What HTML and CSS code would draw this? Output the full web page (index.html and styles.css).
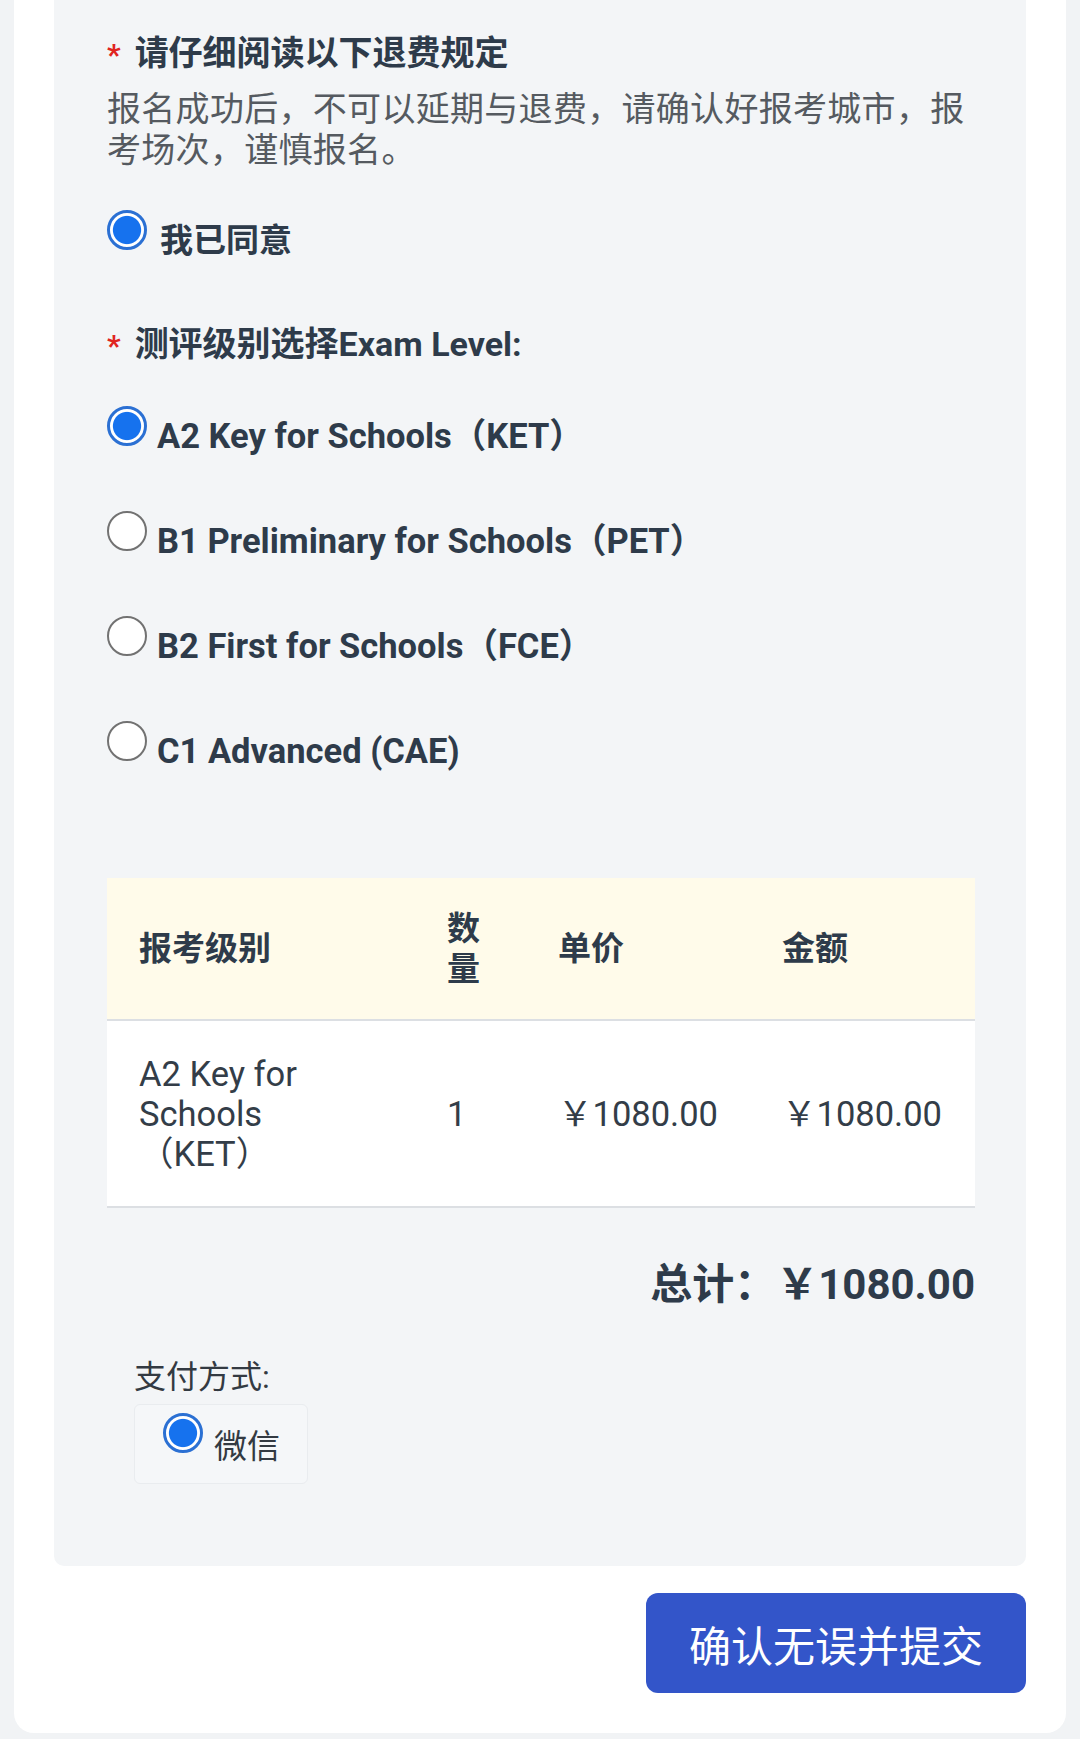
FILE: index.html
```html
<!DOCTYPE html>
<html lang="zh-CN">
<head>
<meta charset="utf-8">
<title>报名确认</title>
<link rel="stylesheet" href="styles.css">
</head>
<body>
<div class="card">
  <div class="panel">
    <div class="label"><span class="req">*</span>请仔细阅读以下退费规定</div>
    <p class="notice">报名成功后，不可以延期与退费，请确认好报考城市，报考场次，谨慎报名。</p>
    <div class="agree">
      <span class="radio checked"></span>
      <span class="agree-text">我已同意</span>
    </div>

    <div class="label level-label"><span class="req">*</span>测评级别选择Exam Level:</div>
    <div class="options">
      <div class="option"><span class="radio checked"></span><span class="opt-text">A2 Key for Schools（KET）</span></div>
      <div class="option"><span class="radio"></span><span class="opt-text">B1 Preliminary for Schools（PET）</span></div>
      <div class="option"><span class="radio"></span><span class="opt-text">B2 First for Schools（FCE）</span></div>
      <div class="option"><span class="radio"></span><span class="opt-text">C1 Advanced (CAE)</span></div>
    </div>

    <table class="order">
      <colgroup>
        <col class="c1"><col class="c2"><col class="c3"><col class="c4">
      </colgroup>
      <thead>
        <tr><th>报考级别</th><th>数量</th><th>单价</th><th>金额</th></tr>
      </thead>
      <tbody>
        <tr><td>A2 Key for Schools（KET）</td><td>1</td><td class="amt">￥1080.00</td><td class="amt">￥1080.00</td></tr>
      </tbody>
    </table>

    <div class="total">总计：￥1080.00</div>

    <div class="pay-label">支付方式:</div>
    <div class="pay-box">
      <span class="radio checked"></span>
      <span class="pay-text">微信</span>
    </div>
  </div>
  <div class="actions">
    <button class="submit">确认无误并提交</button>
  </div>
</div>
</body>
</html>
```

FILE: styles.css
```css
html, body {
  margin: 0;
  padding: 0;
}
body {
  background: #f1f3f5;
  font-family: "Roboto", "Noto Sans CJK SC", sans-serif;
  color: #2e3b4a;
  width: 1080px;
  height: 1739px;
  overflow: hidden;
}
.card {
  margin: 0 14px;
  background: #ffffff;
  border-radius: 0 0 20px 20px;
  padding: 0 40px 40px 40px;
}
.panel {
  background: #f3f5f7;
  border-radius: 0 0 10px 10px;
  padding: 31px 53px 82px 53px;
}
.label {
  font-size: 34px;
  line-height: 44px;
  font-weight: 700;
  color: #2e3b4a;
}
.req {
  color: #e0251f;
  font-size: 30px;
  margin-right: 14px;
}
.notice {
  margin: 12px 0 0 0;
  font-size: 34px;
  line-height: 41px;
  letter-spacing: 0.3px;
  color: #555a60;
  font-weight: 400;
}
.radio {
  flex: none;
  box-sizing: border-box;
  width: 40px;
  height: 40px;
  border-radius: 50%;
  border: 2.5px solid #727272;
  background: #ffffff;
}
.radio.checked {
  border: 3px solid #2b70d3;
  background: radial-gradient(circle closest-side, #1672ee 0, #1672ee 80%, #ffffff 86%);
}
.agree {
  display: flex;
  align-items: flex-start;
  margin-top: 39px;
  gap: 13px;
}
.agree-text {
  font-size: 33px;
  line-height: 44px;
  font-weight: 700;
  padding-top: 9px;
}
.level-label {
  margin-top: 59px;
}
.options {
  margin-top: 38px;
  display: flex;
  flex-direction: column;
}
.option {
  display: flex;
  align-items: flex-start;
  gap: 10px;
  height: 105px;
}
.opt-text {
  font-size: 34.5px;
  line-height: 44px;
  font-weight: 700;
  padding-top: 8px;
}
.order {
  margin-top: 52px;
  width: 100%;
  border-collapse: collapse;
  table-layout: fixed;
}
.c1 { width: 308px; }
.c2 { width: 111px; }
.c3 { width: 224px; }
.c4 { width: 225px; }
.order th {
  background: #fffbea;
  height: 141px;
  padding: 0 30px 0 32px;
  text-align: left;
  font-size: 33px;
  line-height: 40px;
  font-weight: 700;
  color: #2e3b4a;
  border-bottom: 2px solid #dcdfe3;
  vertical-align: middle;
}
.order td {
  background: #ffffff;
  height: 185px;
  padding: 0 0 0 32px;
  text-align: left;
  font-size: 34.5px;
  line-height: 40px;
  font-weight: 400;
  color: #333d48;
  border-bottom: 2px solid #dcdfe3;
  vertical-align: middle;
}
.order td:first-child {
  padding-right: 46px;
}
.order td.amt {
  white-space: nowrap;
}
.total {
  margin-top: 52px;
  margin-right: -2px;
  text-align: right;
  font-size: 42px;
  line-height: 50px;
  font-weight: 700;
  color: #2e3b4a;
}
.pay-label {
  margin: 47px 0 0 27px;
  font-size: 32px;
  line-height: 40px;
  color: #333a42;
}
.pay-box {
  margin: 7px 0 0 27px;
  width: 174px;
  height: 80px;
  box-sizing: border-box;
  display: flex;
  align-items: flex-start;
  gap: 11px;
  padding: 8px 0 0 28px;
  background: #f5f7f9;
  border: 1px solid #e9ecef;
  border-radius: 6px;
}
.pay-text {
  font-size: 33px;
  line-height: 40px;
  padding-top: 14px;
  color: #333a42;
}
.actions {
  display: flex;
  justify-content: flex-end;
  margin-top: 27px;
}
.submit {
  width: 380px;
  height: 100px;
  border: none;
  border-radius: 12px;
  background: #3355c9;
  color: #ffffff;
  font-family: "Roboto", "Noto Sans CJK SC", sans-serif;
  font-size: 42px;
  font-weight: 400;
  letter-spacing: 0;
}
```
